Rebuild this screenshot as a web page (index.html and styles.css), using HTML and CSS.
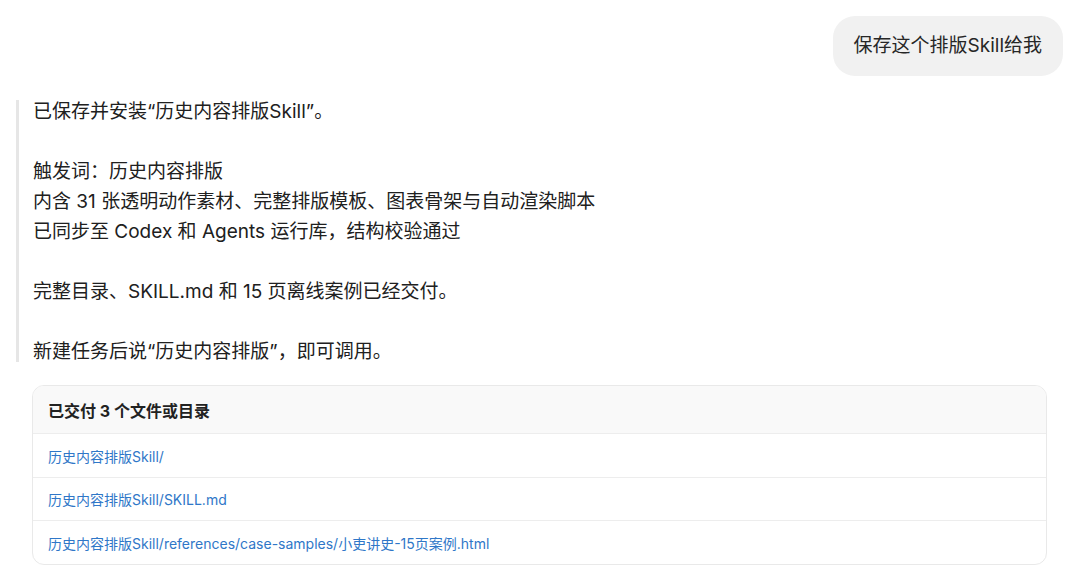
FILE: index.html
```html
<!DOCTYPE html>
<html lang="zh-CN">
<head>
<meta charset="utf-8">
<title>Chat</title>
<link rel="stylesheet" href="styles.css">
</head>
<body>
<main class="chat">
  <div class="user-row">
    <div class="bubble">保存这个排版Skill给我</div>
  </div>
  <div class="reply">
    <p>已保存并安装“历史内容排版Skill”。</p>
    <p>触发词：历史内容排版<br>内含 31 张透明动作素材、完整排版模板、图表骨架与自动渲染脚本<br>已同步至 Codex 和 Agents 运行库，结构校验通过</p>
    <p>完整目录、SKILL.md 和 15 页离线案例已经交付。</p>
    <p>新建任务后说“历史内容排版”，即可调用。</p>
  </div>
  <section class="files">
    <div class="files-head">已交付 3 个文件或目录</div>
    <a class="file" href="#">历史内容排版Skill/</a>
    <a class="file" href="#">历史内容排版Skill/SKILL.md</a>
    <a class="file" href="#">历史内容排版Skill/references/case-samples/小吏讲史-15页案例.html</a>
  </section>
</main>
</body>
</html>
```

FILE: styles.css
```css
html, body {
  margin: 0;
  padding: 0;
  background: #ffffff;
}
body {
  font-family: "Inter", "Noto Sans CJK SC", sans-serif;
  color: #222222;
}
.chat {
  padding: 16px 17px 0 16px;
  display: flex;
  flex-direction: column;
}
.user-row {
  display: flex;
  justify-content: flex-end;
}
.bubble {
  background: #f1f1f1;
  border-radius: 22px;
  padding: 15px 21px;
  font-size: 19px;
  line-height: 30px;
  color: #262626;
}
.reply {
  margin-top: 21px;
  padding-left: 17px;
  background: linear-gradient(#e6e6e6, #e6e6e6) no-repeat 0 3px / 3px calc(100% - 8px);
  font-size: 19px;
  line-height: 30px;
  color: #202020;
}
.reply p {
  margin: 0 0 30px 0;
}
.reply p:last-child {
  margin-bottom: 0;
}
.files {
  margin: 18px 16px 0 16px;
  border: 1px solid #e9e9e9;
  border-radius: 12px;
  overflow: hidden;
  display: flex;
  flex-direction: column;
}
.files-head {
  background: #f9f9f9;
  height: 47px;
  display: flex;
  align-items: center;
  padding: 0 15px;
  font-size: 16px;
  font-weight: 700;
  color: #222222;
  border-bottom: 1px solid #ededed;
}
.file {
  height: 43px;
  display: flex;
  align-items: center;
  padding: 0 15px;
  font-size: 14px;
  color: #2f77c8;
  text-decoration: none;
  border-bottom: 1px solid #ededed;
}
.file:nth-child(3) {
  height: 42px;
}
.file:last-child {
  border-bottom: none;
}
```
